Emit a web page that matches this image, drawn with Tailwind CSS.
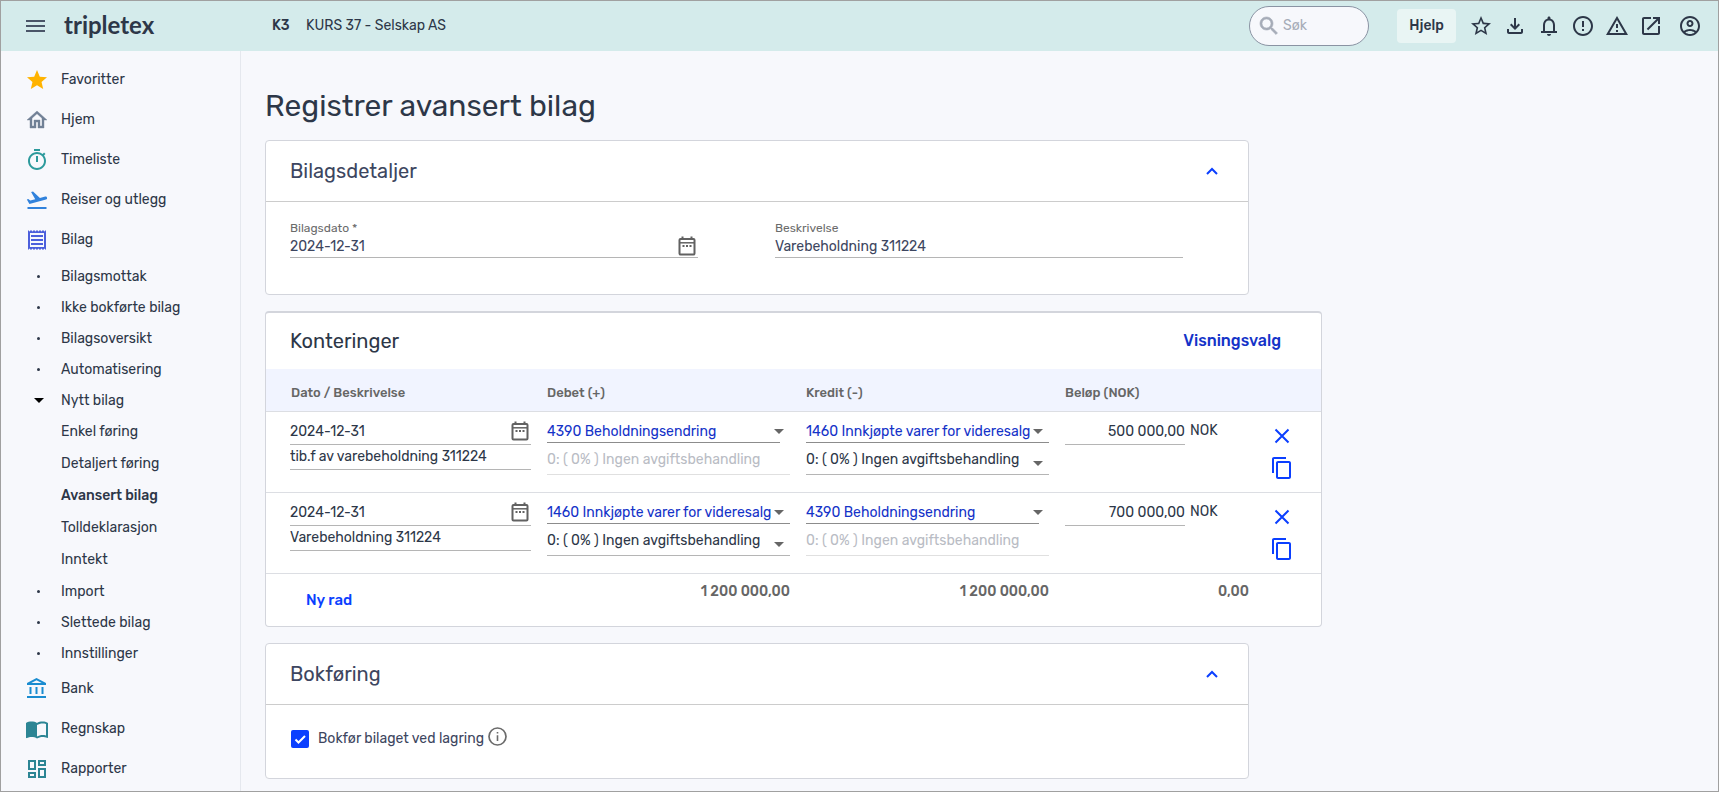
<!DOCTYPE html>
<html lang="no">
<head>
  <meta charset="UTF-8">
  <meta name="viewport" content="width=device-width, initial-scale=1.0">
  <title>Registrer avansert bilag - Tripletex</title>
  <script src="https://cdn.jsdelivr.net/npm/@tailwindcss/browser@4"></script>
</head>
<body class="min-h-screen flex flex-col border border-[#a0a0a0] bg-[#f7f8fc] text-[#2d3748] text-sm font-[Rubik,Roboto,sans-serif]">

  <!-- Shared icons -->
  <svg class="hidden">
    <symbol id="calendar" viewBox="0 0 18 20">
      <rect x="1.500" y="3" width="15" height="15.500" rx="1" fill="none" stroke="currentColor" stroke-width="2"/>
      <path d="M2 6.800h14" stroke="currentColor" stroke-width="1.500"/>
      <path d="M4.500 0.500v3M13.500 0.500v3" stroke="currentColor" stroke-width="2"/>
      <path d="M4.500 9h2v2h-2zM8 9h2v2H8zM11.500 9h2v2h-2z" fill="currentColor"/>
    </symbol>
    <symbol id="close" viewBox="0 0 24 24">
      <path d="M5.500 5.500l13 13M18.500 5.500l-13 13" fill="none" stroke="currentColor" stroke-width="2"/>
    </symbol>
    <symbol id="copy" viewBox="0 0 24 24">
      <path fill="currentColor" d="M16 1H4c-1.100 0-2 .9-2 2v14h2V3h12V1zm3 4H8c-1.100 0-2 .9-2 2v14c0 1.100.9 2 2 2h11c1.100 0 2-.9 2-2V7c0-1.100-.9-2-2-2zm0 16H8V7h11v14z"/>
    </symbol>
    <symbol id="chevron" viewBox="0 0 12 8">
      <path d="M1 7l5-5 5 5" fill="none" stroke="currentColor" stroke-width="2"/>
    </symbol>
    <symbol id="arrow" viewBox="0 0 10 5"><path d="M0 0h10L5 5z" fill="currentColor"/></symbol>
  </svg>

  <header class="h-[50px] shrink-0 flex items-center bg-[#d4ebeb] pl-[23px] pr-[11px]">
    <button aria-label="Meny" class="text-[#4a5568]">
      <svg class="size-6" viewBox="0 0 24 24" fill="currentColor"><path d="M2 6h19v2H2zM2 11h19v2H2zM2 16h19v2H2z"/></svg>
    </button>
    <a href="#" class="ml-4 w-[208px] font-[Lato,sans-serif] text-2xl leading-8 font-bold pb-0.5">tripletex</a>
    <span class="w-[34px] font-medium">K3</span>
    <span>KURS 37 - Selskap AS</span>

    <label class="ml-auto flex items-center w-[120px] h-10 rounded-full border border-[#8a93a3] bg-[#f7f8fc] pl-[7px] text-[#a6acb8]">
      <svg class="size-6 shrink-0" viewBox="0 0 24 24" fill="currentColor" stroke="currentColor" stroke-width="0.600"><path d="M15.500 14h-.79l-.28-.27C15.410 12.590 16 11.110 16 9.500 16 5.910 13.090 3 9.500 3S3 5.910 3 9.500 5.910 16 9.500 16c1.610 0 3.090-.59 4.230-1.570l.27.28v.79l5 4.990L20.490 19l-4.990-5zm-6 0C7.010 14 5 11.990 5 9.500S7.010 5 9.500 5 14 7.010 14 9.500 11.990 14 9.500 14z"/></svg>
      <input type="search" aria-label="Søk" placeholder="Søk" class="w-16 ml-0.5 bg-transparent outline-none placeholder:text-[#a6acb8]">
    </label>
    <button class="ml-7 mr-2 w-[59px] h-[34px] rounded bg-[#e9f5f4] font-medium">Hjelp</button>
    <nav class="flex items-center">
      <button aria-label="Favoritter" class="w-[34px] flex justify-center"><svg class="size-6" viewBox="0 0 24 24" fill="currentColor"><path d="M22 9.240l-7.190-.62L12 2 9.190 8.630 2 9.240l5.460 4.730L5.820 21 12 17.270 18.180 21l-1.630-7.030L22 9.240zM12 15.400l-3.760 2.270 1-4.280-3.320-2.880 4.380-.38L12 6.100l1.710 4.040 4.380.38-3.320 2.880 1 4.280L12 15.400z"/></svg></button>
      <button aria-label="Last ned" class="w-[34px] flex justify-center"><svg class="size-6" viewBox="0 0 24 24" fill="currentColor"><path d="M18 15v3H6v-3H4v3c0 1.100.9 2 2 2h12c1.100 0 2-.9 2-2v-3h-2zm-1-4l-1.410-1.410L13 12.170V4h-2v8.170L8.410 9.590 7 11l5 5 5-5z"/></svg></button>
      <button aria-label="Varsler" class="w-[34px] flex justify-center"><svg class="size-6" viewBox="0 0 24 24" fill="currentColor"><path d="M12 22c1.100 0 2-.9 2-2h-4c0 1.100.9 2 2 2zm6-5v-6c0-3.070-1.630-5.640-4.500-6.320V4c0-.83-.67-1.500-1.500-1.500s-1.500.67-1.500 1.500v.68C7.640 5.360 6 7.920 6 11v6H4v2h16v-2h-2zm-2 0H8v-6c0-2.480 1.510-4.500 4-4.500s4 2.020 4 4.500v6z"/></svg></button>
      <button aria-label="Feil" class="w-[34px] flex justify-center"><svg class="size-6" viewBox="0 0 24 24" fill="currentColor"><path d="M11 15h2v2h-2zm0-8h2v6h-2zm.99-5C6.470 2 2 6.480 2 12s4.470 10 9.990 10C17.520 22 22 17.520 22 12S17.520 2 11.990 2zM12 20c-4.420 0-8-3.580-8-8s3.580-8 8-8 8 3.580 8 8-3.580 8-8 8z"/></svg></button>
      <button aria-label="Advarsler" class="w-[34px] flex justify-center"><svg class="size-6" viewBox="0 0 24 24" fill="currentColor"><path d="M12 5.990L19.530 19H4.470L12 5.990M12 2L1 21h22L12 2zm1 14h-2v2h2v-2zm0-6h-2v4h2v-4z"/></svg></button>
      <button aria-label="Åpne i nytt vindu" class="w-[34px] flex justify-center"><svg class="size-6" viewBox="0 0 24 24" fill="currentColor"><path d="M19 19H5V5h7V3H5c-1.110 0-2 .9-2 2v14c0 1.100.89 2 2 2h14c1.100 0 2-.9 2-2v-7h-2v7zM14 3v2h3.590l-9.830 9.830 1.410 1.410L19 6.410V10h2V3h-7z"/></svg></button>
      <button aria-label="Konto" class="w-[34px] ml-[5px] flex justify-center"><svg class="size-6" viewBox="0 0 24 24" fill="currentColor"><path d="M12 2C6.480 2 2 6.480 2 12s4.480 10 10 10 10-4.480 10-10S17.520 2 12 2zM7.350 18.500C8.660 17.560 10.260 17 12 17s3.340.56 4.650 1.500c-1.310.94-2.910 1.500-4.650 1.500s-3.340-.56-4.650-1.500zm10.790-1.380C16.450 15.800 14.320 15 12 15s-4.450.8-6.140 2.120C4.700 15.730 4 13.950 4 12c0-4.420 3.580-8 8-8s8 3.580 8 8c0 1.950-.7 3.730-1.860 5.120zM12 6c-1.930 0-3.500 1.570-3.500 3.500S10.070 13 12 13s3.500-1.570 3.500-3.500S13.930 6 12 6zm0 5c-.83 0-1.500-.67-1.500-1.500S11.170 8 12 8s1.500.67 1.500 1.500S12.830 11 12 11z"/></svg></button>
    </nav>
  </header>

  <div class="flex flex-grow">
    <!-- Sidebar -->
    <nav class="w-60 shrink-0 border-r border-[#e5e8ee] pt-[9px]">
      <a href="#" class="flex items-center h-10 pl-6 gap-3"><svg class="size-6 text-[#ffb300]" viewBox="0 0 24 24" fill="currentColor"><path d="M12 17.270L18.180 21l-1.640-7.030L22 9.240l-7.190-.61L12 2 9.190 8.630 2 9.240l5.460 4.730L5.820 21z"/></svg>Favoritter</a>
      <a href="#" class="flex items-center h-10 pl-6 gap-3"><svg class="size-6 text-[#718096]" viewBox="0 0 24 24" fill="currentColor" stroke="currentColor" stroke-width="0.400"><path d="M12 5.690l5 4.500V18h-2v-6H9v6H7v-7.810l5-4.500M12 3L2 12h3v8h6v-6h2v6h6v-8h3L12 3z"/></svg>Hjem</a>
      <a href="#" class="flex items-center h-10 pl-6 gap-3"><svg class="size-6 text-[#2c9a9c]" viewBox="0 0 24 24" fill="currentColor"><path d="M9 1h6v2H9zM11 8h2v6h-2zM19.030 7.390l1.420-1.420c-.43-.51-.9-.99-1.410-1.410l-1.420 1.420C16.070 4.740 14.120 4 12 4c-4.970 0-9 4.030-9 9s4.020 9 9 9 9-4.030 9-9c0-2.120-.74-4.070-1.970-5.610zM12 20c-3.870 0-7-3.130-7-7s3.130-7 7-7 7 3.130 7 7-3.130 7-7 7z"/></svg>Timeliste</a>
      <a href="#" class="flex items-center h-10 pl-6 gap-3"><svg class="size-6 text-[#3182dc]" viewBox="0 0 24 24" fill="currentColor"><path d="M2.500 19h19v2h-19v-2zm19.570-9.360c-.21-.8-1.040-1.280-1.840-1.060L14.920 10l-6.900-6.430-1.930.51 4.140 7.170-4.970 1.330-1.970-1.540-1.450.39 2.590 4.490L21 11.490c.81-.23 1.280-1.050 1.070-1.850z"/></svg>Reiser og utlegg</a>
      <a href="#" class="flex items-center h-10 pl-6 gap-3"><svg class="size-6 text-[#4c5fdc]" viewBox="0 0 24 24" fill="currentColor"><path d="M19.500 3.500L18 2l-1.500 1.500L15 2l-1.500 1.500L12 2l-1.500 1.500L9 2 7.500 3.500 6 2 4.500 3.500 3 2v20l1.500-1.500L6 22l1.500-1.500L9 22l1.500-1.500L12 22l1.500-1.500L15 22l1.500-1.500L18 22l1.500-1.500L21 22V2l-1.500 1.500zM19 19.090H5V4.910h14v14.180zM6 15h12v2H6zm0-4h12v2H6zm0-4h12v2H6z"/></svg>Bilag</a>

      <ul class="pt-px">
        <li><a href="#" class="flex items-center h-[31px] pl-9 gap-[21px]"><span class="size-[3px] rounded-full bg-[#2d3748]"></span>Bilagsmottak</a></li>
        <li><a href="#" class="flex items-center h-[31px] pl-9 gap-[21px]"><span class="size-[3px] rounded-full bg-[#2d3748]"></span>Ikke bokførte bilag</a></li>
        <li><a href="#" class="flex items-center h-[31px] pl-9 gap-[21px]"><span class="size-[3px] rounded-full bg-[#2d3748]"></span>Bilagsoversikt</a></li>
        <li><a href="#" class="flex items-center h-[31px] pl-9 gap-[21px]"><span class="size-[3px] rounded-full bg-[#2d3748]"></span>Automatisering</a></li>
        <li>
          <a href="#" class="flex items-center h-[31px] pl-[33px] gap-[17px]"><svg class="w-[10px] h-[5px] text-black"><use href="#arrow"/></svg>Nytt bilag</a>
          <ul class="pl-[60px] leading-8">
            <li><a href="#">Enkel føring</a></li>
            <li><a href="#">Detaljert føring</a></li>
            <li><a href="#" class="font-medium">Avansert bilag</a></li>
            <li><a href="#">Tolldeklarasjon</a></li>
            <li><a href="#">Inntekt</a></li>
          </ul>
        </li>
        <li><a href="#" class="flex items-center h-[31px] pl-9 gap-[21px]"><span class="size-[3px] rounded-full bg-[#2d3748]"></span>Import</a></li>
        <li><a href="#" class="flex items-center h-[31px] pl-9 gap-[21px]"><span class="size-[3px] rounded-full bg-[#2d3748]"></span>Slettede bilag</a></li>
        <li><a href="#" class="flex items-center h-[31px] pl-9 gap-[21px]"><span class="size-[3px] rounded-full bg-[#2d3748]"></span>Innstillinger</a></li>
      </ul>

      <a href="#" class="flex items-center h-10 pl-6 gap-3"><svg class="size-6 text-[#1a8cd0]" viewBox="0 0 24 24" fill="currentColor"><path d="M6.500 10h-2v7h2v-7zm6 0h-2v7h2v-7zm8.500 9H2v2h19v-2zm-2.500-9h-2v7h2v-7zm-7-6.740L16.710 6H6.290l5.210-2.740m0-2.260L2 6v2h19V6l-9.500-5z"/></svg>Bank</a>
      <a href="#" class="flex items-center h-10 pl-6 gap-3"><svg class="size-6 text-[#2c8594]" viewBox="0 0 24 24" fill="currentColor"><path d="M21 5c-1.110-.35-2.330-.5-3.500-.5-1.950 0-4.050.4-5.500 1.500-1.450-1.100-3.550-1.500-5.500-1.500S2.450 4.900 1 6v14.650c0 .25.25.5.5.5.1 0 .15-.05.25-.05C3.100 20.450 5.050 20 6.500 20c1.950 0 4.050.4 5.500 1.500 1.350-.85 3.800-1.500 5.500-1.500 1.650 0 3.350.3 4.750 1.050.1.05.15.05.25.05.25 0 .5-.25.5-.5V6c-.6-.45-1.250-.75-2-1zm0 13.500c-1.100-.35-2.300-.5-3.500-.5-1.700 0-4.150.65-5.500 1.500V8c1.350-.85 3.800-1.500 5.500-1.500 1.200 0 2.400.15 3.500.5v11.500z"/></svg>Regnskap</a>
      <a href="#" class="flex items-center h-10 pl-6 gap-3"><svg class="size-6 text-[#2c8594]" viewBox="0 0 24 24" fill="currentColor"><path d="M19 5v2h-4V5h4M9 5v6H5V5h4m10 8v6h-4v-6h4M9 17v2H5v-2h4M21 3h-8v6h8V3zM11 3H3v10h8V3zm10 8h-8v10h8V11zm-10 4H3v6h8v-6z"/></svg>Rapporter</a>
    </nav>

    <main class="flex-grow pt-[35px] pl-6 pr-6">
      <h1 class="text-3xl leading-10 mb-[14px]">Registrer avansert bilag</h1>

      <div class="flex flex-col items-start gap-4">
        <!-- Bilagsdetaljer -->
        <section class="w-full max-w-[984px] rounded border border-[#d3d5dc] bg-white text-[#3d4660]">
          <div class="flex items-center justify-between h-[61px] pl-6 pr-[30px] border-b border-[#cccccc]">
            <h2 class="text-xl">Bilagsdetaljer</h2>
            <button aria-label="Skjul" class="text-[#0b3fff]"><svg class="w-3 h-2"><use href="#chevron"/></svg></button>
          </div>
          <div class="flex gap-[77px] pl-6 pt-[18px] h-[92px]">
            <div class="w-[408px]">
              <label for="bilagsdato" class="block text-xs text-[#6b6b6b]">Bilagsdato *</label>
              <div class="flex items-center h-[22px] border-b border-[#b5b5b5]">
                <input id="bilagsdato" type="text" value="2024-12-31" class="flex-grow outline-none">
                <button aria-label="Velg dato" class="text-[#616161] pr-0.5 pb-0.5"><svg class="w-[18px] h-5"><use href="#calendar"/></svg></button>
              </div>
            </div>
            <div class="w-[408px]">
              <label for="beskrivelse" class="block text-xs text-[#6b6b6b]">Beskrivelse</label>
              <div class="flex items-center h-[22px] border-b border-[#b5b5b5]">
                <input id="beskrivelse" type="text" value="Varebeholdning 311224" class="flex-grow outline-none">
              </div>
            </div>
          </div>
        </section>

        <!-- Konteringer -->
        <section class="w-full max-w-[1057px] rounded border border-t-2 border-[#d3d5dc] bg-white">
          <div class="flex items-center justify-between h-14 pl-6 pr-10">
            <h2 class="text-xl">Konteringer</h2>
            <button class="text-base font-medium text-[#1433c8]">Visningsvalg</button>
          </div>
          <table class="w-full table-fixed">
            <colgroup>
              <col class="w-[273px]">
              <col class="w-[259px]">
              <col class="w-[259px]">
              <col class="w-[200px]">
              <col>
            </colgroup>
            <thead>
              <tr class="h-[42px] bg-[#f1f4ff] border-b border-[#dcdee3] text-left text-[13px] text-[#666666]">
                <th class="pl-[25px] pt-2 font-medium">Dato / Beskrivelse</th>
                <th class="pl-2 pt-2 font-medium">Debet (+)</th>
                <th class="pl-2 pt-2 font-medium">Kredit (-)</th>
                <th class="pl-2 pt-2 font-medium">Beløp (NOK)</th>
                <th></th>
              </tr>
            </thead>
            <tbody>
              <tr class="h-[81px] border-b border-[#dcdee3] align-top">
                <td class="pl-6 pr-2 pt-1.5">
                  <div class="flex items-center h-[27px] border-b border-[#b5b5b5]">
                    <input type="text" aria-label="Dato" value="2024-12-31" class="flex-grow min-w-0 pt-0.5 outline-none">
                    <button aria-label="Velg dato" class="text-[#616161] pr-0.5"><svg class="w-[18px] h-5"><use href="#calendar"/></svg></button>
                  </div>
                  <input type="text" aria-label="Beskrivelse" value="tib.f av varebeholdning 311224" class="block w-full h-[25px] border-b border-[#b5b5b5] outline-none">
                </td>
                <td class="px-2 pt-1.5">
                  <div class="relative">
                    <input type="text" aria-label="Debetkonto" value="4390 Beholdningsendring" class="block w-[233px] h-[25px] pt-1 border-b border-[#8c8c8c] text-[#1433c8] outline-none">
                    <svg class="absolute right-1.5 top-[11px] w-[10px] h-[5px] text-[#666666]"><use href="#arrow"/></svg>
                  </div>
                  <select aria-label="Mva debet" disabled class="block w-full h-8 pt-1 appearance-none border-b border-[#e0e0e0] text-[#b9bcc4] opacity-100"><option>0: ( 0% ) Ingen avgiftsbehandling</option></select>
                </td>
                <td class="px-2 pt-1.5">
                  <div class="relative">
                    <input type="text" aria-label="Kreditkonto" value="1460 Innkjøpte varer for videresalg" class="block w-full h-[25px] pt-1 border-b border-[#8c8c8c] text-[#1433c8] outline-none">
                    <svg class="absolute right-1.5 top-[11px] w-[10px] h-[5px] text-[#666666]"><use href="#arrow"/></svg>
                  </div>
                  <div class="relative">
                    <select aria-label="Mva kredit" class="block w-full h-8 pt-1 appearance-none border-b border-[#b5b5b5] outline-none"><option>0: ( 0% ) Ingen avgiftsbehandling</option></select>
                    <svg class="absolute right-1.5 top-[18px] w-[10px] h-[5px] text-[#666666]"><use href="#arrow"/></svg>
                  </div>
                </td>
                <td class="pl-2 pt-1.5">
                  <div class="flex items-center gap-[5px]">
                    <input type="text" aria-label="Beløp" value="500 000,00" class="w-[120px] h-[27px] pt-0.5 border-b border-[#b5b5b5] text-right outline-none">
                    <span>NOK</span>
                  </div>
                </td>
                <td class="pl-[13px] pt-3 text-[#0b3fff]">
                  <button aria-label="Slett rad" class="block mb-2"><svg class="size-6"><use href="#close"/></svg></button>
                  <button aria-label="Kopier rad" class="block"><svg class="size-6"><use href="#copy"/></svg></button>
                </td>
              </tr>
              <tr class="h-[81px] border-b border-[#dcdee3] align-top">
                <td class="pl-6 pr-2 pt-1.5">
                  <div class="flex items-center h-[27px] border-b border-[#b5b5b5]">
                    <input type="text" aria-label="Dato" value="2024-12-31" class="flex-grow min-w-0 pt-0.5 outline-none">
                    <button aria-label="Velg dato" class="text-[#616161] pr-0.5"><svg class="w-[18px] h-5"><use href="#calendar"/></svg></button>
                  </div>
                  <input type="text" aria-label="Beskrivelse" value="Varebeholdning 311224" class="block w-full h-[25px] border-b border-[#b5b5b5] outline-none">
                </td>
                <td class="px-2 pt-1.5">
                  <div class="relative">
                    <input type="text" aria-label="Debetkonto" value="1460 Innkjøpte varer for videresalg" class="block w-full h-[25px] pt-1 border-b border-[#8c8c8c] text-[#1433c8] outline-none">
                    <svg class="absolute right-1.5 top-[11px] w-[10px] h-[5px] text-[#666666]"><use href="#arrow"/></svg>
                  </div>
                  <div class="relative">
                    <select aria-label="Mva debet" class="block w-full h-8 pt-1 appearance-none border-b border-[#b5b5b5] outline-none"><option>0: ( 0% ) Ingen avgiftsbehandling</option></select>
                    <svg class="absolute right-1.5 top-[18px] w-[10px] h-[5px] text-[#666666]"><use href="#arrow"/></svg>
                  </div>
                </td>
                <td class="px-2 pt-1.5">
                  <div class="relative">
                    <input type="text" aria-label="Kreditkonto" value="4390 Beholdningsendring" class="block w-[233px] h-[25px] pt-1 border-b border-[#8c8c8c] text-[#1433c8] outline-none">
                    <svg class="absolute right-1.5 top-[11px] w-[10px] h-[5px] text-[#666666]"><use href="#arrow"/></svg>
                  </div>
                  <select aria-label="Mva kredit" disabled class="block w-full h-8 pt-1 appearance-none border-b border-[#e0e0e0] text-[#b9bcc4] opacity-100"><option>0: ( 0% ) Ingen avgiftsbehandling</option></select>
                </td>
                <td class="pl-2 pt-1.5">
                  <div class="flex items-center gap-[5px]">
                    <input type="text" aria-label="Beløp" value="700 000,00" class="w-[120px] h-[27px] pt-0.5 border-b border-[#b5b5b5] text-right outline-none">
                    <span>NOK</span>
                  </div>
                </td>
                <td class="pl-[13px] pt-3 text-[#0b3fff]">
                  <button aria-label="Slett rad" class="block mb-2"><svg class="size-6"><use href="#close"/></svg></button>
                  <button aria-label="Kopier rad" class="block"><svg class="size-6"><use href="#copy"/></svg></button>
                </td>
              </tr>
            </tbody>
            <tfoot>
              <tr class="h-[53px] align-top text-right font-medium text-[#666666]">
                <td class="pl-10 pt-3.5 text-left"><button class="text-[15px] leading-6 font-medium text-[#0b3fff]">Ny rad</button></td>
                <td class="pr-2 pt-2">1&nbsp;200&nbsp;000,00</td>
                <td class="pr-2 pt-2">1&nbsp;200&nbsp;000,00</td>
                <td class="pr-2 pt-2">0,00</td>
                <td></td>
              </tr>
            </tfoot>
          </table>
        </section>

        <!-- Bokføring -->
        <section class="w-full max-w-[984px] rounded border border-[#d3d5dc] bg-white text-[#3d4660]">
          <div class="flex items-center justify-between h-[61px] pl-6 pr-[30px] border-b border-[#cccccc]">
            <h2 class="text-xl">Bokføring</h2>
            <button aria-label="Skjul" class="text-[#0b3fff]"><svg class="w-3 h-2"><use href="#chevron"/></svg></button>
          </div>
          <div class="flex items-start pl-[25px] pt-[22px] h-[73px]">
            <div class="relative mt-[3px] mr-[9px]">
              <input id="bokfor" type="checkbox" checked class="block size-[18px] appearance-none rounded-xs checked:bg-[#0b3fff]">
              <svg class="absolute inset-0 size-[18px] pointer-events-none" viewBox="0 0 18 18"><path d="M4.500 9.500l3 3 6.500-6.500" fill="none" stroke="#fff" stroke-width="2"/></svg>
            </div>
            <label for="bokfor" class="pt-0.5">Bokfør bilaget ved lagring</label>
            <button aria-label="Informasjon" class="ml-1 text-[#6b6b6b]">
              <svg class="size-[19px]" viewBox="0 0 19 19"><circle cx="9.500" cy="9.500" r="8.500" fill="none" stroke="currentColor" stroke-width="1.700"/><path d="M8.700 5h1.600v1.600H8.700zM8.700 8.300h1.600v5.700H8.700z" fill="currentColor"/></svg>
            </button>
          </div>
        </section>
      </div>
    </main>
  </div>
</body>
</html>
